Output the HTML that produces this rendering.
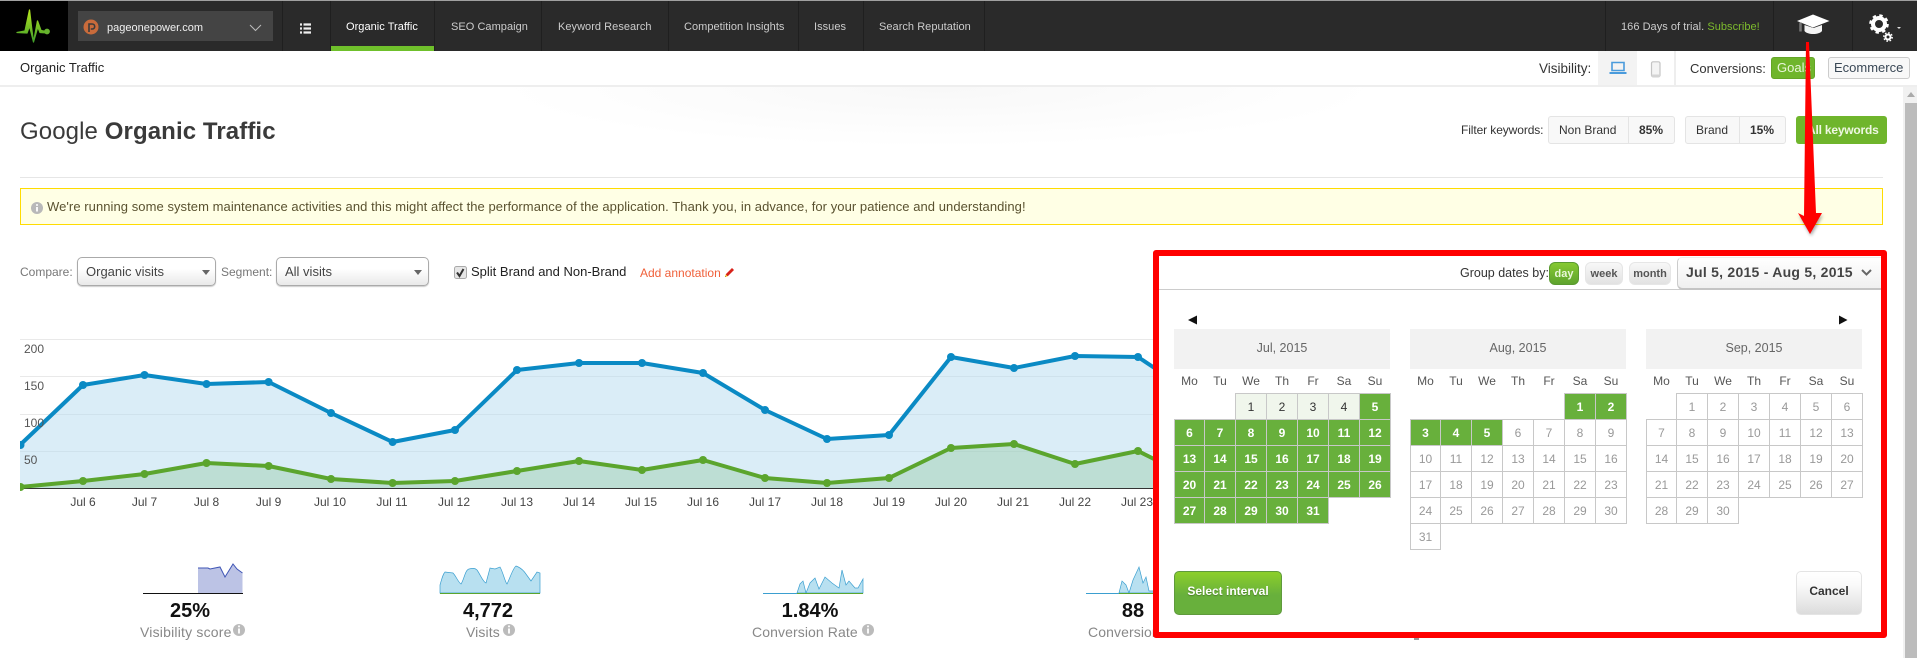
<!DOCTYPE html>
<html><head><meta charset="utf-8"><title>Organic Traffic</title>
<style>
html,body{margin:0;padding:0;width:1917px;height:658px;overflow:hidden;background:#fff;font-family:"Liberation Sans",Arial,sans-serif;color:#333}
.a{position:absolute;white-space:nowrap;line-height:20px}
.b{position:absolute;box-sizing:border-box}
.nav{font-size:11px;color:#ccc;top:17px;letter-spacing:.04px}
.sep{position:absolute;top:1px;width:1px;height:50px;background:#1f1f1f}
.sel{position:absolute;box-sizing:border-box;top:257px;height:29px;border:1px solid #aaa;border-radius:5px;background:linear-gradient(#fff,#fff 40%,#e9e9e9);box-shadow:0 1px 1px #ccc}
.tri{position:absolute;width:0;height:0;border-left:4px solid transparent;border-right:4px solid transparent;border-top:5px solid #666}
.fl{position:absolute;box-sizing:border-box;top:116px;height:28px;border:1px solid #e4e4e4;border-radius:3px;background:#f8f8f8}
.panel{position:absolute;left:1153px;top:250px;width:734px;height:388px;box-sizing:border-box;border:6px solid #f00;border-radius:3px;background:#fff}
.mh{position:absolute;top:329px;width:216px;height:40px;line-height:39px;text-align:center;background:#f2f2f2;font-size:12.5px;color:#666}
table.c{position:absolute;top:368px;border-collapse:collapse;table-layout:fixed;width:217px;font-size:12px}
table.c td,table.c th{height:23px;padding:2px 0 0;text-align:center;border:1px solid #c8c8c8;color:#999;font-weight:normal;line-height:23px}
table.c th{border:0;color:#555}
table.c td.e{border:0}
table.c td.s{background:#68b03c;color:#fff;font-weight:bold}
table.c td.p{background:#f0f6ec;color:#333}
.gb{position:absolute;box-sizing:border-box;top:262px;height:23px;border-radius:6px;font-size:11px;font-weight:bold;text-align:center;line-height:22px;color:#555;background:linear-gradient(#f8f8f8,#e2e2e2);border:1px solid #e6e6e6}
.lab{font-size:14px;color:#888;letter-spacing:.1px}
</style></head><body>

<!-- top bar -->
<div class="b" style="left:0;top:0;width:1917px;height:51px;background:#2a2a2a;border-top:1px solid #a0a0a0"></div>
<div class="b" style="left:0;top:1px;width:68px;height:50px;background:#000"></div>
<svg class="b" style="left:0;top:0" width="68" height="51" viewBox="0 0 68 51">
<defs><linearGradient id="lg" x1="0" y1="0" x2="0" y2="1"><stop offset="0" stop-color="#b6e51e"/><stop offset="1" stop-color="#3f9e2a"/></linearGradient></defs>
<path d="M17 32.5L25 31 29.5 10 31.5 27 33.5 42 37.5 21 41 30.5 46 31.5 46 32.8 40 32.5 37.8 27 33.5 42 29.5 26 27 33z" fill="url(#lg)" stroke="url(#lg)" stroke-width="1.3" stroke-linejoin="round"/>
<circle cx="47" cy="31.5" r="2.9" fill="#66b32e"/></svg>
<div class="b" style="left:78px;top:11px;width:195px;height:30px;background:#444"></div>
<svg class="b" style="left:83px;top:19px" width="16" height="16" viewBox="0 0 16 16"><circle cx="8" cy="8" r="7.5" fill="#c96b3b"/><path d="M6 13V5h3.2a2.4 2.4 0 0 1 0 5H7.8" fill="none" stroke="#3b3b3b" stroke-width="1.6"/></svg>
<div class="a" style="left:107px;top:18px;font-size:11px;color:#f0f0f0">pageonepower.com</div>
<svg class="b" style="left:249px;top:24px" width="13" height="8"><path d="M1 1L6.5 6.5 12 1" fill="none" stroke="#bbb"/></svg>
<svg class="b" style="left:300px;top:23px" width="12" height="11"><path d="M0 1.5h2M0 5.5h2M0 9.5h2M3.5 1.5H11M3.5 5.5H11M3.5 9.5H11" stroke="#eee" stroke-width="2.2"/></svg>
<div class="sep" style="left:282px"></div><div class="sep" style="left:330px"></div><div class="sep" style="left:434px"></div><div class="sep" style="left:541px"></div><div class="sep" style="left:668px"></div><div class="sep" style="left:798px"></div><div class="sep" style="left:863px"></div><div class="sep" style="left:984px"></div><div class="sep" style="left:1605px"></div><div class="sep" style="left:1773px"></div><div class="sep" style="left:1852px"></div>
<div class="b" style="left:331px;top:46px;width:103px;height:5px;background:#6fc02b"></div>
<div class="a nav" style="left:346px;color:#fff">Organic Traffic</div>
<div class="a nav" style="left:451px">SEO Campaign</div>
<div class="a nav" style="left:558px">Keyword Research</div>
<div class="a nav" style="left:684px">Competition Insights</div>
<div class="a nav" style="left:814px">Issues</div>
<div class="a nav" style="left:879px">Search Reputation</div>
<div class="a nav" style="left:1621px">166 Days of trial. <span style="color:#7dbb2d">Subscribe!</span></div>
<svg class="b" style="left:1795px;top:12px" width="110" height="34" viewBox="1795 12 110 34">
<path d="M1804.5 25v6c3 4 14.500 4 17.500 0v-6l-8.500 3z" fill="#f4f4f4"/>
<path d="M1797 21l16-6.500 16.500 6.500-16.500 6.500z" fill="#fff"/>
<path d="M1800.500 22.500v9" stroke="#777" stroke-width="2.500"/>
<circle cx="1879" cy="24" r="6" fill="none" stroke="#fff" stroke-width="4"/>
<circle cx="1879" cy="24" r="8.500" fill="none" stroke="#fff" stroke-width="2.600" stroke-dasharray="3.340 3.340"/>
<circle cx="1888" cy="37" r="2.500" fill="none" stroke="#fff" stroke-width="2"/>
<circle cx="1888" cy="37" r="4.200" fill="none" stroke="#fff" stroke-width="1.400" stroke-dasharray="1.650 1.650"/>
<path d="M1897 27h4l-2 2z" fill="#ddd"/>
</svg>

<!-- sub bar -->
<div class="a" style="left:20px;top:58px;font-size:13px;color:#222">Organic Traffic</div>
<div class="b" style="left:0;top:85px;width:1917px;height:2px;background:#eee"></div>
<div class="b" style="left:500px;top:87px;width:880px;height:60px;background:radial-gradient(ellipse 440px 60px at 50% 0,#f8f8f8,#fff 100%)"></div>
<div class="a" style="left:1539px;top:59px;font-size:13.500px;color:#333">Visibility:</div>
<div class="b" style="left:1598px;top:51px;width:39px;height:34px;background:#f3f3f3"></div>
<svg class="b" style="left:1609px;top:61px" width="18" height="14"><path d="M3 1.500h12v8H3z" fill="none" stroke="#4a9bdc" stroke-width="1.600"/><path d="M.5 11h17v2H.5z" fill="#4a9bdc"/></svg>
<svg class="b" style="left:1650px;top:61px" width="12" height="17"><rect x="1.500" y=".8" width="8.500" height="15" rx="1.500" fill="#f4f4f4" stroke="#c4c4c4" stroke-width="1.200"/><path d="M1.500 13.500h8.500v2.500H1.500z" fill="#d4d4d4"/></svg>
<div class="b" style="left:1674px;top:51px;width:2px;height:34px;background:#eee"></div>
<div class="a" style="left:1690px;top:59px;font-size:13px;color:#333">Conversions:</div>
<div class="b" style="left:1771px;top:57px;width:44px;height:22px;background:#6fb52c;border:1px solid #64a527;border-radius:3px;color:#e8f5d8;font-size:13px;line-height:19px;padding-left:5px">Goals</div>
<div class="b" style="left:1828px;top:57px;width:82px;height:22px;background:#f8f8f8;border:1px solid #ccc;border-radius:3px;color:#3a4856;font-size:13px;line-height:19px;padding-left:5px">Ecommerce</div>

<!-- scrollbar -->
<div class="b" style="left:1903px;top:87px;width:14px;height:571px;background:#f1f1f1"></div>
<div class="b" style="left:1905px;top:103px;width:12px;height:555px;background:#bcbcbc"></div>
<div class="b" style="left:1907px;top:92px;width:0;height:0;border-left:4px solid transparent;border-right:4px solid transparent;border-bottom:5px solid #aaa"></div>

<!-- title -->
<div class="a" style="left:20px;top:118px;font-size:24px;line-height:28px;color:#3a3a3a;letter-spacing:.1px">Google <b>Organic Traffic</b></div>
<div class="a" style="left:1461px;top:120px;font-size:12px;color:#333;letter-spacing:-.1px">Filter keywords:</div>
<div class="fl" style="left:1548px;width:127px"></div><div class="b" style="left:1628px;top:117px;width:1px;height:26px;background:#e4e4e4"></div>
<div class="a" style="left:1559px;top:120px;font-size:12px">Non Brand</div>
<div class="a" style="left:1639px;top:120px;font-size:12px;font-weight:bold">85%</div>
<div class="fl" style="left:1685px;width:101px"></div><div class="b" style="left:1739px;top:117px;width:1px;height:26px;background:#e4e4e4"></div>
<div class="a" style="left:1696px;top:120px;font-size:12px">Brand</div>
<div class="a" style="left:1750px;top:120px;font-size:12px;font-weight:bold">15%</div>
<div class="b" style="left:1796px;top:116px;width:91px;height:28px;background:#6fb52c;border-radius:3px"></div>
<div class="a" style="left:1807px;top:120px;font-size:12px;font-weight:bold;color:#eef7e2;letter-spacing:-.2px">All keywords</div>

<div class="b" style="left:20px;top:177px;width:1863px;height:1px;background:#e6e6e6"></div>
<div class="b" style="left:20px;top:188px;width:1863px;height:37px;background:#ffffe5;border:1px solid #ffdc00"></div>
<svg class="b" style="left:31px;top:202px" width="12" height="12"><circle cx="6" cy="6" r="6" fill="#b9b9b9"/><path d="M6 5v4.500" stroke="#fff" stroke-width="1.800"/><circle cx="6" cy="3" r="1" fill="#fff"/></svg>
<div class="a" style="left:47px;top:197px;font-size:13px;color:#5a5230;letter-spacing:.06px">We're running some system maintenance activities and this might affect the performance of the application. Thank you, in advance, for your patience and understanding!</div>

<!-- controls -->
<div class="a" style="left:20px;top:262px;font-size:12px;color:#777">Compare:</div>
<div class="sel" style="left:77px;width:139px"></div>
<div class="a" style="left:86px;top:262px;font-size:13px;color:#444">Organic visits</div>
<div class="tri" style="left:202px;top:270px"></div>
<div class="a" style="left:221px;top:262px;font-size:12px;color:#777">Segment:</div>
<div class="sel" style="left:276px;width:153px"></div>
<div class="a" style="left:285px;top:262px;font-size:13px;color:#444">All visits</div>
<div class="tri" style="left:414px;top:270px"></div>
<svg class="b" style="left:454px;top:266px" width="13" height="13"><rect x=".5" y=".5" width="12" height="12" rx="2" fill="#e6e6e6" stroke="#aaa"/><path d="M3 6.500l2.500 3.500L9.500 3" fill="none" stroke="#333" stroke-width="2"/></svg>
<div class="a" style="left:471px;top:262px;font-size:13px;color:#222">Split Brand and Non-Brand</div>
<div class="a" style="left:640px;top:263px;font-size:12px;color:#f0603a">Add annotation</div>
<svg class="b" style="left:724px;top:267px" width="11" height="11"><path d="M1 10l1-3 6-6 2 2-6 6z" fill="#d8221a"/><path d="M1 10l.8-2.600 1.800 1.800z" fill="#f2d21e"/><path d="M1 10l.7-.3-.4-.4z" fill="#111"/></svg>

<!-- chart -->
<svg class="b" style="left:0;top:0" width="1160" height="658" viewBox="0 0 1160 658" font-family="Liberation Sans, Arial, sans-serif" font-size="12">
<g stroke="#e9e9e9"><path d="M20 339.500H1160M20 376.500H1160M20 414.500H1160"/><path d="M20 451.500H1160"/></g>
<path d="M20 445L83 385 144.500 375 206.500 384 268.600 382 331 413 392.600 442 455 430 517 370 579 363 642 363 703 373 765 410 827 439 889 435 951 357 1014 368 1075 356 1138 357 1156 369V488H20z" fill="#b5dcef" fill-opacity=".5"/>
<path d="M20 487L83 481 144.500 474 206.500 463 268.600 466 331 479 392.600 483 455 481 517 471 579 461 642 470 703 460 765 478 827 483 889 478 951 448 1014 444 1075 464 1138 451 1156 460V488H20z" fill="#8fc49a" fill-opacity=".38"/>
<path d="M20 488.500H1156" stroke="#333" stroke-width="1"/>
<path d="M20 445L83 385 144.500 375 206.500 384 268.600 382 331 413 392.600 442 455 430 517 370 579 363 642 363 703 373 765 410 827 439 889 435 951 357 1014 368 1075 356 1138 357 1156 369" fill="none" stroke="#0a8ac4" stroke-width="4" stroke-linejoin="round"/>
<path d="M20 487L83 481 144.500 474 206.500 463 268.600 466 331 479 392.600 483 455 481 517 471 579 461 642 470 703 460 765 478 827 483 889 478 951 448 1014 444 1075 464 1138 451 1156 460" fill="none" stroke="#5ba52d" stroke-width="4" stroke-linejoin="round"/>
<g fill="#0a8ac4"><circle cx="20.500" cy="445" r="4"/><circle cx="83" cy="385" r="4"/><circle cx="144.500" cy="375" r="4"/><circle cx="206.500" cy="384" r="4"/><circle cx="268.600" cy="382" r="4"/><circle cx="331" cy="413" r="4"/><circle cx="392.600" cy="442" r="4"/><circle cx="455" cy="430" r="4"/><circle cx="517" cy="370" r="4"/><circle cx="579" cy="363" r="4"/><circle cx="642" cy="363" r="4"/><circle cx="703" cy="373" r="4"/><circle cx="765" cy="410" r="4"/><circle cx="827" cy="439" r="4"/><circle cx="889" cy="435" r="4"/><circle cx="951" cy="357" r="4"/><circle cx="1014" cy="368" r="4"/><circle cx="1075" cy="356" r="4"/><circle cx="1138" cy="357" r="4"/></g>
<g fill="#5ba52d"><circle cx="20.500" cy="487" r="4"/><circle cx="83" cy="481" r="4"/><circle cx="144.500" cy="474" r="4"/><circle cx="206.500" cy="463" r="4"/><circle cx="268.600" cy="466" r="4"/><circle cx="331" cy="479" r="4"/><circle cx="392.600" cy="483" r="4"/><circle cx="455" cy="481" r="4"/><circle cx="517" cy="471" r="4"/><circle cx="579" cy="461" r="4"/><circle cx="642" cy="470" r="4"/><circle cx="703" cy="460" r="4"/><circle cx="765" cy="478" r="4"/><circle cx="827" cy="483" r="4"/><circle cx="889" cy="478" r="4"/><circle cx="951" cy="448" r="4"/><circle cx="1014" cy="444" r="4"/><circle cx="1075" cy="464" r="4"/><circle cx="1138" cy="451" r="4"/></g>
<rect x="0" y="436" width="20" height="58" fill="#fff"/>
<g fill="#555"><text x="24" y="353">200</text><text x="24" y="390">150</text><text x="24" y="427">100</text><text x="24" y="464">50</text></g>
<g fill="#444" text-anchor="middle"><text x="83" y="506">Jul 6</text><text x="144.500" y="506">Jul 7</text><text x="206.500" y="506">Jul 8</text><text x="268.600" y="506">Jul 9</text><text x="330" y="506">Jul 10</text><text x="392" y="506">Jul 11</text><text x="454" y="506">Jul 12</text><text x="517" y="506">Jul 13</text><text x="579" y="506">Jul 14</text><text x="641" y="506">Jul 15</text><text x="703" y="506">Jul 16</text><text x="765" y="506">Jul 17</text><text x="827" y="506">Jul 18</text><text x="889" y="506">Jul 19</text><text x="951" y="506">Jul 20</text><text x="1013" y="506">Jul 21</text><text x="1075" y="506">Jul 22</text><text x="1137" y="506">Jul 23</text></g>

<!-- sparklines -->
<path d="M198 593V568L208 568 210 569 220 567 225 577 233 564 237 569 242.500 573V593z" fill="#bcc3e5"/>
<path d="M198 568L208 568 210 569 220 567 225 577 233 564 237 569 242.500 573" fill="none" stroke="#3f55b5"/>
<path d="M143 593.500H243" stroke="#111"/>
<path d="M440 593V585C442 578 443 574 445 572L453 573C456 576 458 582 461 584 464 580 465 570 469 569 473 568 475 568 477 570 480 574 483 582 486 583L490 568 495 569 500 567C503 572 505 582 507 584 510 578 513 568 516 566 519 567 522 569 524.500 572L531 581 537 572 540 573V593z" fill="#b8e0f0" stroke="#3b9fd0" stroke-width=".7"/>
<path d="M440 593.500H540" stroke="#5ba52d"/>
<path d="M797 593L800 584 803 581 806 593 810 583 815 578 819 589 825 577 832 583 839 588 842 570 846 585 849 581 855 588 858 588 863 579V593z" fill="#b8e0f0" stroke="#3b9fd0" stroke-width=".7"/>
<path d="M763 593.500H797" stroke="#3b9fd0"/><path d="M797 593.500H863" stroke="#5ba52d"/>
<path d="M1119 593L1122 581 1126 585 1129 593 1133 580 1139 567 1143 583 1146 577 1149 591 1156 591V593z" fill="#b8e0f0" stroke="#3b9fd0" stroke-width=".7"/>
<path d="M1086 593.500H1119" stroke="#3b9fd0"/><path d="M1119 593.500H1156" stroke="#5ba52d"/>
<g fill="#bbb"><circle cx="239" cy="630" r="6"/><circle cx="509" cy="630" r="6"/><circle cx="868" cy="630" r="6"/></g>
<path d="M239 628.500v5M509 628.500v5M868 628.500v5" stroke="#fff" stroke-width="1.800"/>
<path d="M239 625.500v1.800M509 625.500v1.800M868 625.500v1.800" stroke="#fff" stroke-width="1.800"/>
</svg>
<div class="a" style="left:170px;top:601px;width:40px;text-align:center;font-size:20px;font-weight:bold;color:#111">25%</div>
<div class="a lab" style="left:140px;top:622px;letter-spacing:.2px">Visibility score</div>
<div class="a" style="left:463px;top:601px;width:50px;text-align:center;font-size:20px;font-weight:bold;color:#111">4,772</div>
<div class="a lab" style="left:466px;top:622px">Visits</div>
<div class="a" style="left:780px;top:601px;width:60px;text-align:center;font-size:20px;font-weight:bold;color:#111">1.84%</div>
<div class="a lab" style="left:752px;top:622px">Conversion Rate</div>
<div class="a" style="left:1113px;top:601px;width:40px;text-align:center;font-size:20px;font-weight:bold;color:#111">88</div>
<div class="a lab" style="left:1088px;top:622px">Conversions</div>
<div class="b" style="left:1414px;top:638px;width:5px;height:2px;background:#999"></div>

<!-- date picker panel -->
<div class="panel"></div>
<div class="b" style="left:1159px;top:289px;width:722px;height:1px;background:#ccc"></div>
<div class="a" style="left:1460px;top:263px;font-size:12.500px;color:#333">Group dates by:</div>
<div class="gb" style="left:1549px;width:30px;color:#e8f7d8;background:linear-gradient(#86c931,#5ea32e);border-color:#5a9a30">day</div>
<div class="gb" style="left:1585px;width:38px">week</div>
<div class="gb" style="left:1629px;width:42px">month</div>
<div class="b" style="left:1677px;top:257px;width:204px;height:33px;background:linear-gradient(#fff,#f0f0f0);border-left:1px solid #ccc;border-top:1px solid #eee;border-bottom:2px solid #c4c4c4;border-radius:5px 0 0 6px"></div>
<div class="a" style="left:1686px;top:262px;font-size:14px;font-weight:bold;color:#444;letter-spacing:.25px">Jul 5, 2015 - Aug 5, 2015</div>
<svg class="b" style="left:1861px;top:269px" width="11" height="8"><path d="M1 1l4.500 4.500L10 1" fill="none" stroke="#666" stroke-width="2"/></svg>
<svg class="b" style="left:1188px;top:315px" width="10" height="10"><path d="M0 5L9 .5v9z" fill="#111"/></svg>
<svg class="b" style="left:1838px;top:315px" width="10" height="10"><path d="M9.500 5L1 .5v9z" fill="#111"/></svg>

<div class="mh" style="left:1174px">Jul, 2015</div>
<div class="mh" style="left:1410px">Aug, 2015</div>
<div class="mh" style="left:1646px">Sep, 2015</div>

<table class="c" style="left:1174px"><colgroup><col style="width:30px"><col span="6" style="width:31px"></colgroup>
<tr><th>Mo</th><th>Tu</th><th>We</th><th>Th</th><th>Fr</th><th>Sa</th><th>Su</th></tr>
<tr><td class="e"></td><td class="e"></td><td class="p">1</td><td class="p">2</td><td class="p">3</td><td class="p">4</td><td class="s">5</td></tr>
<tr><td class="s">6</td><td class="s">7</td><td class="s">8</td><td class="s">9</td><td class="s">10</td><td class="s">11</td><td class="s">12</td></tr>
<tr><td class="s">13</td><td class="s">14</td><td class="s">15</td><td class="s">16</td><td class="s">17</td><td class="s">18</td><td class="s">19</td></tr>
<tr><td class="s">20</td><td class="s">21</td><td class="s">22</td><td class="s">23</td><td class="s">24</td><td class="s">25</td><td class="s">26</td></tr>
<tr><td class="s">27</td><td class="s">28</td><td class="s">29</td><td class="s">30</td><td class="s">31</td><td class="e"></td><td class="e"></td></tr>
</table>
<table class="c" style="left:1410px"><colgroup><col style="width:30px"><col span="6" style="width:31px"></colgroup>
<tr><th>Mo</th><th>Tu</th><th>We</th><th>Th</th><th>Fr</th><th>Sa</th><th>Su</th></tr>
<tr><td class="e"></td><td class="e"></td><td class="e"></td><td class="e"></td><td class="e"></td><td class="s">1</td><td class="s">2</td></tr>
<tr><td class="s">3</td><td class="s">4</td><td class="s">5</td><td>6</td><td>7</td><td>8</td><td>9</td></tr>
<tr><td>10</td><td>11</td><td>12</td><td>13</td><td>14</td><td>15</td><td>16</td></tr>
<tr><td>17</td><td>18</td><td>19</td><td>20</td><td>21</td><td>22</td><td>23</td></tr>
<tr><td>24</td><td>25</td><td>26</td><td>27</td><td>28</td><td>29</td><td>30</td></tr>
<tr><td>31</td><td class="e"></td><td class="e"></td><td class="e"></td><td class="e"></td><td class="e"></td><td class="e"></td></tr>
</table>
<table class="c" style="left:1646px"><colgroup><col style="width:30px"><col span="6" style="width:31px"></colgroup>
<tr><th>Mo</th><th>Tu</th><th>We</th><th>Th</th><th>Fr</th><th>Sa</th><th>Su</th></tr>
<tr><td class="e"></td><td>1</td><td>2</td><td>3</td><td>4</td><td>5</td><td>6</td></tr>
<tr><td>7</td><td>8</td><td>9</td><td>10</td><td>11</td><td>12</td><td>13</td></tr>
<tr><td>14</td><td>15</td><td>16</td><td>17</td><td>18</td><td>19</td><td>20</td></tr>
<tr><td>21</td><td>22</td><td>23</td><td>24</td><td>25</td><td>26</td><td>27</td></tr>
<tr><td>28</td><td>29</td><td>30</td><td class="e"></td><td class="e"></td><td class="e"></td><td class="e"></td></tr>
</table>

<div class="b" style="left:1174px;top:571px;width:108px;height:44px;border-radius:5px;border:1px solid #5f9a3c;background:linear-gradient(#8ccf2a,#68b03c 55%,#68b03c);color:#fff;font-size:12px;font-weight:bold;text-align:center;line-height:38px;text-shadow:0 1px 1px #4d7f2a">Select interval</div>
<div class="b" style="left:1796px;top:571px;width:66px;height:44px;border-radius:5px;border:1px solid #e4e4e4;background:linear-gradient(#fff,#fafafa 30%,#dcdcdc);color:#333;font-size:12px;font-weight:bold;text-align:center;line-height:38px">Cancel</div>

<!-- red arrow -->
<svg class="b" style="left:0;top:0;pointer-events:none" width="1917" height="658" viewBox="0 0 1917 658">
<defs><filter id="sh" x="-50%" y="-5%" width="200%" height="110%"><feGaussianBlur stdDeviation="1.500"/></filter></defs>
<path d="M1799 215L1811 236 1823 215 1815 218H1805z" fill="#000" fill-opacity=".35" filter="url(#sh)"/>
<path d="M1806 42H1809L1816 213 1822 213 1810 234 1798 213 1804 216z" fill="#f00"/>
</svg>
</body></html>
